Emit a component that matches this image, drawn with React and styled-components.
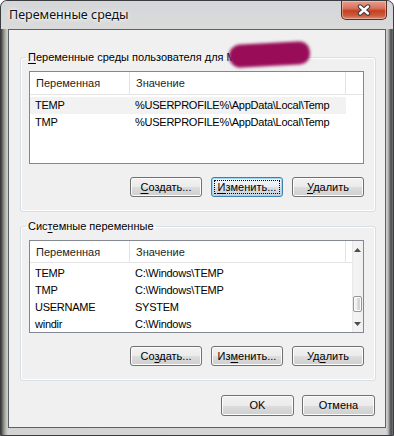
import styled, { createGlobalStyle } from "styled-components";

const GlobalStyle = createGlobalStyle`
  html, body { margin: 0; padding: 0; background: #fff; }
  body { font-family: "Liberation Sans", Arial, sans-serif; font-size: 11px; color: #000; }
  * { box-sizing: border-box; }
`

const Window = styled.div`
  width: 394px;
  height: 436px;
  display: flex;
  flex-direction: column;
  border: 1px solid #3a3d40;
  border-radius: 7px 7px 0 0;
  overflow: hidden;
  background: linear-gradient(to right,
    #3b3b33 0px, #7d7d72 2px, #bdbdb6 5px, #d3d3d3 7px,
    #d6d6d6 calc(100% - 7px), #b9b9b9 calc(100% - 5px), #4a4a4a calc(100% - 2px), #777 100%);
`
const TitleBar = styled.div`
  height: 28px;
  display: flex;
  justify-content: space-between;
  align-items: flex-start;
  padding: 0 6px 0 8px;
  background: linear-gradient(to bottom, #d4d6d8, #dadada);
`
const Title = styled.div`
  font-family: "Noto Sans", "Open Sans", sans-serif;
  font-size: 12.5px;
  line-height: 28px;
  color: #111;
  text-shadow: 0 0 6px #fff, 0 0 3px #fff;
`
const CloseButton = styled.div`
  width: 46px;
  height: 19px;
  display: flex;
  align-items: center;
  justify-content: center;
  border: 1px solid #5e2a20;
  border-top: none;
  border-radius: 0 0 5px 5px;
  background: linear-gradient(to bottom, #e6a08f 0%, #d8735d 40%, #c4401f 55%, #cc5a3c 80%, #d98a72 100%);
  box-shadow: inset 0 0 0 1px rgba(255, 220, 210, 0.45);
`
const Client = styled.div`
  flex: 1;
  margin: 0 7px 7px;
  border: 1px solid #58626c;
  background: #f0f0f0;
  padding: 0 9px 0 11px;
  display: flex;
  flex-direction: column;
`
const Group = styled.fieldset`
  margin: ${({ $top }) => $top}px 0 0;
  min-width: 0;
  padding: 7px 11px 14px 8px;
  border: 1px solid #d5dfe5;
  border-radius: 3px;
  box-shadow: inset 0 0 0 1px #fff;
`
const Legend = styled.legend`
  position: relative;
  margin-left: -3px;
  padding: 0 2px;
  line-height: 14px;
  white-space: nowrap;
`
const Blot = styled.span`
  position: absolute;
  left: calc(100% - 9px);
  top: -7px;
  width: 81px;
  height: 23px;
  border-radius: 12px 11px 11px 12px;
  background: #980c58;
  transform: rotate(-3deg);
  filter: blur(1.5px);
`
const Key = styled.span`
  text-decoration: underline;
  text-underline-offset: 2px;
`
const List = styled.div`
  height: 93px;
  border: 1px solid #828790;
  background: #fff;
  display: flex;
  overflow: hidden;
`
const ListBody = styled.div`
  flex: 1;
  display: flex;
  flex-direction: column;
`
const Header = styled.div`
  height: 23px;
  display: grid;
  grid-template-columns: 100px 216px 1fr;
  border-bottom: 1px solid #e5e5e5;
  margin-bottom: 2px;
  color: #1e1e1e;
`
const HeadCell = styled.div`
  padding: 2px 0 0 6px;
  line-height: 19px;
  border-right: ${({ $last }) => ($last ? "none" : "1px solid #e3e3e3")};
`
const Row = styled.div`
  width: 316px;
  height: 17px;
  display: grid;
  grid-template-columns: 100px 216px;
  line-height: 17px;
  background: ${({ $hot }) => ($hot ? "#f2f2f2" : "transparent")};
`
const Cell = styled.div`
  padding-left: 5px;
  white-space: nowrap;
  overflow: hidden;
  letter-spacing: -0.25px;
`
const ScrollBar = styled.div`
  width: 17px;
  display: flex;
  flex-direction: column;
  background: linear-gradient(to right, #e6e6e6 0, #f4f4f4 2px, #f0f0f0 100%);
`
const Arrow = styled.div`
  height: 17px;
  display: flex;
  align-items: center;
  justify-content: center;
`
const Track = styled.div`
  flex: 1;
`
const Thumb = styled.div`
  height: 16px;
  margin: 0 1px;
  border: 1px solid #979797;
  border-radius: 2px;
  background: linear-gradient(to right, #f6f6f6, #ececec 50%, #dcdcdc 50%, #cdcdcd);
  box-shadow: inset 0 0 0 1px #fbfbfb;
`
const ButtonRow = styled.div`
  display: flex;
  justify-content: flex-end;
  gap: ${({ $gap }) => $gap}px;
  margin-top: ${({ $top }) => $top}px;
  padding-right: ${({ $right }) => $right || 0}px;
`
const Button = styled.div`
  width: ${({ $w }) => $w}px;
  height: ${({ $h }) => $h}px;
  display: flex;
  align-items: center;
  justify-content: center;
  border: 1px solid ${({ $focus }) => ($focus ? "#3c7fb1" : "#707070")};
  border-radius: 3px;
  background: ${({ $focus }) =>
    $focus
      ? "linear-gradient(to bottom, #f0f4f7 0%, #e8edf1 50%, #d8dfe5 50%, #ccd4db 100%)"
      : "linear-gradient(to bottom, #f2f2f2 0%, #ebebeb 50%, #dddddd 50%, #cfcfcf 100%)"};
  box-shadow: inset 0 0 0 1px ${({ $focus }) => ($focus ? "#9fd8f6" : "#fcfcfc")};
  outline: ${({ $focus }) => ($focus ? "1px dotted #000" : "none")};
  outline-offset: -4px;
  line-height: 1;
`

const CloseGlyph = () => (
  <svg width="14" height="12" viewBox="0 0 14 12">
    <path d="M3 2.5 L11 9.5 M11 2.5 L3 9.5" stroke="#3a3a3a" strokeWidth="4.4" strokeLinecap="round" />
    <path d="M3 2.5 L11 9.5 M11 2.5 L3 9.5" stroke="#fff" strokeWidth="2.4" strokeLinecap="round" />
  </svg>
)

const Tri = ({ down }) => (
  <svg width="7" height="4" viewBox="0 0 7 4">
    <path d={down ? "M0 0 H7 L3.5 4 Z" : "M0 4 H7 L3.5 0 Z"} fill="#4d4d4d" />
  </svg>
)

const userVars = [
  ["TEMP", "%USERPROFILE%\\AppData\\Local\\Temp"],
  ["TMP", "%USERPROFILE%\\AppData\\Local\\Temp"],
]
const sysVars = [
  ["TEMP", "C:\\Windows\\TEMP"],
  ["TMP", "C:\\Windows\\TEMP"],
  ["USERNAME", "SYSTEM"],
  ["windir", "C:\\Windows"],
]

const VarList = ({ rows, hot, scroll }) => (
  <List>
    <ListBody>
      <Header>
        <HeadCell>Переменная</HeadCell>
        <HeadCell>Значение</HeadCell>
        <HeadCell $last />
      </Header>
      {rows.map(([name, value], i) => (
        <Row key={name} $hot={i === hot}>
          <Cell>{name}</Cell>
          <Cell>{value}</Cell>
        </Row>
      ))}
    </ListBody>
    {scroll && (
      <ScrollBar>
        <Arrow><Tri /></Arrow>
        <Track>
          <Thumb style={{ marginTop: scroll }} />
        </Track>
        <Arrow><Tri down /></Arrow>
      </ScrollBar>
    )}
  </List>
)

export default function App() {
  return (
    <>
      <GlobalStyle />
      <Window>
        <TitleBar>
          <Title>Переменные среды</Title>
          <CloseButton><CloseGlyph /></CloseButton>
        </TitleBar>
        <Client>
          <Group $top={20}>
            <Legend>
              <Key>П</Key>еременные среды пользователя для M
              <Blot />
            </Legend>
            <VarList rows={userVars} hot={0} />
            <ButtonRow $gap={9} $top={13}>
              <Button $w={72} $h={20}><span><Key>С</Key>оздать...</span></Button>
              <Button $w={72} $h={20} $focus><span><Key>И</Key>зменить...</span></Button>
              <Button $w={72} $h={20}><span><Key>У</Key>далить</span></Button>
            </ButtonRow>
          </Group>
          <Group $top={7}>
            <Legend>
              Сис<Key>т</Key>емные переменные
            </Legend>
            <VarList rows={sysVars} scroll={38} />
            <ButtonRow $gap={9} $top={13}>
              <Button $w={72} $h={20}><span>Со<Key>з</Key>дать...</span></Button>
              <Button $w={72} $h={20}><span>Из<Key>м</Key>енить...</span></Button>
              <Button $w={72} $h={20}><span>Уд<Key>а</Key>лить</span></Button>
            </ButtonRow>
          </Group>
          <ButtonRow $gap={8} $top={14} $right={1}>
            <Button $w={73} $h={21}>OK</Button>
            <Button $w={73} $h={21}>Отмена</Button>
          </ButtonRow>
        </Client>
      </Window>
    </>
  )
}
